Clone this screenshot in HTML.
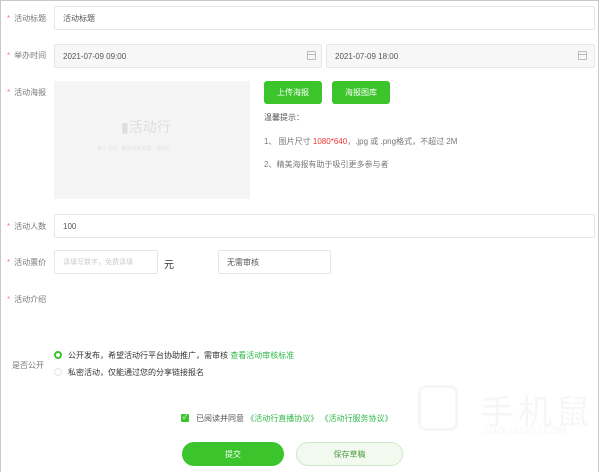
<!DOCTYPE html>
<html><head><meta charset="utf-8"><style>
*{margin:0;padding:0;box-sizing:border-box}
body{width:600px;height:472px;background:#fff;font-family:"Liberation Sans","Noto Sans CJK SC",sans-serif;font-size:8px;color:#666;position:relative;overflow:hidden}
.frame{position:absolute;left:0;top:0;width:599px;height:472px;border:1px solid #c8c8c8;border-bottom:none}
.a{position:absolute;white-space:nowrap}
.lbl{position:absolute;left:7px;font-size:8px;color:#777}
.lbl b{color:#f08080;font-weight:normal;margin-right:4px}
.in{position:absolute;border:1px solid #e6e6e6;border-radius:2px;background:#fff;padding-left:8px;display:flex;align-items:center;font-size:8px;color:#555}
.gray{background:#f7f7f7}
.btn{position:absolute;background:#3cc42c;color:#fff;border-radius:3px;display:flex;align-items:center;justify-content:center;font-size:8px}
.cal{position:absolute;width:9px;height:9px;border:1px solid #bbb;border-radius:1px}
.cal:before{content:"";position:absolute;left:0;right:0;top:2px;border-top:1px solid #bbb}
</style></head><body>
<div class="frame"></div>

<div class="lbl" style="top:13px"><b>*</b>活动标题</div>
<div class="in" style="left:54px;top:6px;width:541px;height:24px">活动标题</div>

<div class="lbl" style="top:50px"><b>*</b>举办时间</div>
<div class="in gray" style="left:54px;top:44px;width:268px;height:24px">2021-07-09 09:00</div>
<div class="cal" style="left:307px;top:51px"></div>
<div class="in gray" style="left:326px;top:44px;width:269px;height:24px">2021-07-09 18:00</div>
<div class="cal" style="left:578px;top:51px"></div>

<div class="lbl" style="top:87px"><b>*</b>活动海报</div>
<div class="a" style="left:54px;top:81px;width:196px;height:118px;background:#f6f5f6"></div>
<div class="a" style="left:121px;top:117px;font-size:14px;color:#dedede">▮活动行</div>
<div class="a" style="left:97px;top:145px;font-size:5px;color:#e2e2e2">每个活动 · 都值得被发现 · 活动行</div>

<div class="btn" style="left:264px;top:81px;width:58px;height:23px">上传海报</div>
<div class="btn" style="left:332px;top:81px;width:58px;height:23px">海报图库</div>
<div class="a" style="left:264px;top:112px;color:#555">温馨提示：</div>
<div class="a" style="left:264px;top:136px;color:#777">1、 图片尺寸 <span style="color:#e33">1080*640</span>，.jpg 或 .png格式，不超过 2M</div>
<div class="a" style="left:264px;top:159px;color:#777">2、精美海报有助于吸引更多参与者</div>

<div class="lbl" style="top:221px"><b>*</b>活动人数</div>
<div class="in" style="left:54px;top:214px;width:541px;height:24px">100</div>

<div class="lbl" style="top:257px"><b>*</b>活动票价</div>
<div class="in" style="left:54px;top:250px;width:104px;height:24px;color:#ccc;font-size:7px">请填写数字，免费请填</div>
<div class="a" style="left:164px;top:256px;font-size:10px;color:#333">元</div>
<div class="in" style="left:218px;top:250px;width:113px;height:24px">无需审核</div>

<div class="lbl" style="top:294px"><b>*</b>活动介绍</div>

<div class="lbl" style="top:360px;left:12px">是否公开</div>
<div class="a" style="left:54px;top:351px;width:8px;height:8px;border-radius:50%;border:2px solid #3cc42c"></div>
<div class="a" style="left:68px;top:350px;color:#333">公开发布，希望活动行平台协助推广，需审核 <span style="color:#2fb84a">查看活动审核标准</span></div>
<div class="a" style="left:54px;top:368px;width:8px;height:8px;border-radius:50%;border:1px solid #e5e5e5"></div>
<div class="a" style="left:68px;top:367px;color:#333">私密活动，仅能通过您的分享链接报名</div>

<div class="a" style="left:181px;top:414px;width:8px;height:8px;background:#3cc42c;border-radius:1px;color:#fff;font-size:7px;line-height:8px;text-align:center">✓</div>
<div class="a" style="left:196px;top:413px;color:#555">已阅读并同意 <span style="color:#2fb84a">《活动行直播协议》 《活动行服务协议》</span></div>

<div class="btn" style="left:182px;top:442px;width:102px;height:24px;border-radius:12px">提交</div>
<div class="a" style="left:296px;top:442px;width:107px;height:24px;border-radius:12px;border:1px solid #cde8c8;background:#f2faf0;color:#4a9a3f;display:flex;align-items:center;justify-content:center">保存草稿</div>

<div class="a" style="left:418px;top:385px;width:40px;height:46px;border:3px solid #f6f6f6;border-radius:8px"></div>
<div class="a" style="left:480px;top:385px;font-size:34px;color:#f6f6f6;letter-spacing:4px">手机鼠</div>
<div class="a" style="left:483px;top:426px;font-size:10px;color:#f6f6f6">SHOUJISHU.COM</div>
</body></html>
